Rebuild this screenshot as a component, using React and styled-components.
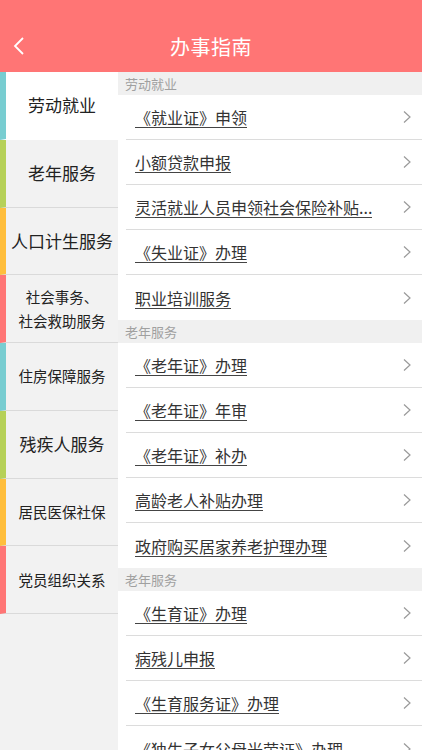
import styled, { createGlobalStyle } from 'styled-components';

const GlobalStyle = createGlobalStyle`
    html, body {
        margin: 0;
        padding: 0;
        background: #ffffff;
        font-family: "Noto Sans CJK SC", "Noto Sans", sans-serif;
    }
`

const stripes = ['#78cdd1', '#b6d158', '#ffbe3c', '#ff7575'];

const categories = [
    { label: '劳动就业', size: 17 },
    { label: '老年服务', size: 17 },
    { label: '人口计生服务', size: 17 },
    { label: ['社会事务、', '社会救助服务'], size: 14.5 },
    { label: '住房保障服务', size: 14.5 },
    { label: '残疾人服务', size: 17 },
    { label: '居民医保社保', size: 14.5 },
    { label: '党员组织关系', size: 14.5 },
];

const sections = [
    {
        title: '劳动就业',
        items: ['《就业证》申领', '小额贷款申报', '灵活就业人员申领社会保险补贴...', '《失业证》办理', '职业培训服务'],
    },
    {
        title: '老年服务',
        items: ['《老年证》办理', '《老年证》年审', '《老年证》补办', '高龄老人补贴办理', '政府购买居家养老护理办理'],
    },
    {
        title: '老年服务',
        items: ['《生育证》办理', '病残儿申报', '《生育服务证》办理', '《独生子女父母光荣证》办理'],
    },
];

const Page = styled.div`
    width: 100%;
    height: 100vh;
    display: flex;
    flex-direction: column;
    overflow: hidden;
`

const Header = styled.header`
    height: 72px;
    flex-shrink: 0;
    background-color: #ff7575;
    color: white;
    display: grid;
    grid-template-columns: 60px 1fr 60px;
    align-items: center;
    padding-top: 20px;
    box-sizing: border-box;
    h1 {
        margin: 0;
        text-align: center;
        font-size: 20px;
        font-weight: 400;
        letter-spacing: 0.5px;
    }
    button {
        background: none;
        border: none;
        padding: 0 0 0 12px;
        display: flex;
        align-items: center;
        cursor: pointer;
    }
`

const Body = styled.div`
    flex: 1;
    display: flex;
    min-height: 0;
`

const Sidebar = styled.nav`
    width: 118px;
    flex-shrink: 0;
    background-color: #f2f2f2;
`

const Category = styled.div`
    height: 67.75px;
    box-sizing: border-box;
    display: flex;
    flex-direction: column;
    align-items: center;
    justify-content: center;
    border-left: 6px solid ${p => p.$stripe};
    border-bottom: 1px solid ${p => (p.$active ? 'transparent' : '#dadada')};
    background-color: ${p => (p.$active ? '#ffffff' : '#f2f2f2')};
    color: #222;
    font-size: ${p => p.$size}px;
    line-height: ${p => (p.$size < 16 ? '24px' : '22px')};
    span {
        white-space: nowrap;
    }
`

const List = styled.div`
    flex: 1;
    min-width: 0;
    background-color: #ffffff;
`

const SectionTitle = styled.div`
    height: 23px;
    background-color: #f0f0f0;
    color: #a0a0a0;
    font-size: 13px;
    line-height: 23px;
    padding-left: 7px;
`

const Row = styled.div`
    height: 45px;
    margin-left: 8px;
    padding: 0 10px 0 9px;
    box-sizing: border-box;
    display: flex;
    align-items: center;
    justify-content: space-between;
    border-bottom: ${p => (p.$last ? 'none' : '1px solid #dcdcdc')};
    span {
        font-size: 16px;
        color: #333;
        text-decoration: underline;
        text-decoration-color: #444;
        text-underline-offset: 3px;
        white-space: nowrap;
        overflow: hidden;
        text-overflow: ellipsis;
    }
    svg {
        flex-shrink: 0;
        margin-left: 8px;
    }
`

const BackIcon = () => (
    <svg width="14" height="20" viewBox="0 0 14 20">
        <polyline points="11,2 3,10 11,18" fill="none" stroke="white" strokeWidth="1.8" />
    </svg>
)

const Chevron = () => (
    <svg width="10" height="16" viewBox="0 0 10 16">
        <polyline points="2,2.5 8,8 2,13.5" fill="none" stroke="#9a9a9a" strokeWidth="1.2" />
    </svg>
)

export default function App() {
    return (
        <Page>
            <GlobalStyle />
            <Header>
                <button aria-label="back"><BackIcon /></button>
                <h1>办事指南</h1>
                <div />
            </Header>
            <Body>
                <Sidebar>
                    {categories.map((c, i) => (
                        <Category key={i} $stripe={stripes[i % 4]} $active={i === 0} $size={c.size}>
                            {Array.isArray(c.label)
                                ? c.label.map(l => <span key={l}>{l}</span>)
                                : <span>{c.label}</span>}
                        </Category>
                    ))}
                </Sidebar>
                <List>
                    {sections.map((s, si) => (
                        <section key={si}>
                            <SectionTitle>{s.title}</SectionTitle>
                            {s.items.map((item, ii) => (
                                <Row key={item} $last={ii === s.items.length - 1}>
                                    <span>{item}</span>
                                    <Chevron />
                                </Row>
                            ))}
                        </section>
                    ))}
                </List>
            </Body>
        </Page>
    )
}
